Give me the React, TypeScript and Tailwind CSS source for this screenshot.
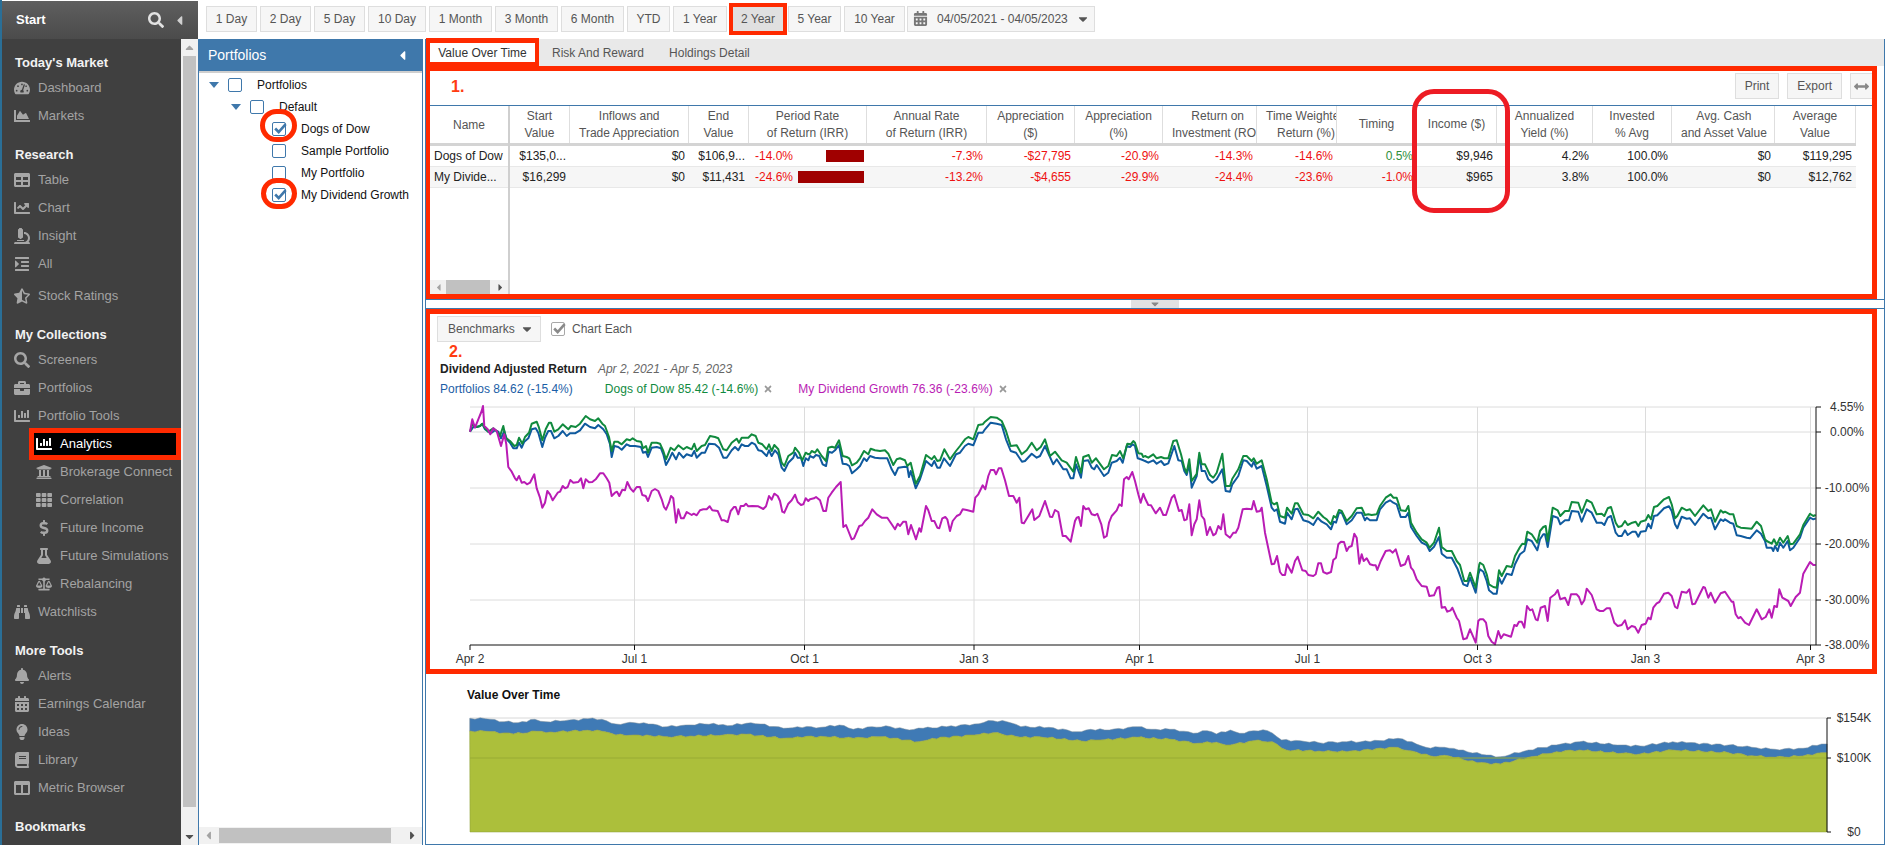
import React from 'react';
import {
  FaArrowsAltH,
  FaBalanceScale,
  FaBell,
  FaBinoculars,
  FaBook,
  FaBriefcase,
  FaCalendarAlt,
  FaCaretDown,
  FaCaretLeft,
  FaCaretRight,
  FaCaretUp,
  FaChartArea,
  FaChartBar,
  FaChartLine,
  FaColumns,
  FaDollarSign,
  FaFlask,
  FaIndent,
  FaLightbulb,
  FaMicroscope,
  FaSearch,
  FaStarHalfAlt,
  FaTable,
  FaTachometerAlt,
  FaTh,
  FaTimes,
  FaUniversity,
} from 'react-icons/fa';

// traced from crops of the reference, x = base + v / 3, y = 400 + v / 3
const magenta: [number, string][] = [
  [465, '15,92 22,55 30,80 40,55 50,30 54,15 58,75 68,85 76,100 85,82 95,90 108,135 118,100 124,130 130,198 140,212 150,232 155,238 162,225 170,245 178,243 186,250 195,245 208,220 215,262 225,290 232,320 240,305 247,270 255,280 263,298 278,275 285,272 293,255 300,262 308,258 316,237 325,245 340,243 348,232 355,262 362,235 372,244 382,243 392,235 405,217 415,217 425,232 433,245 440,285 450,275 456,272 463,285 472,266 480,268 487,243 496,262 505,272 515,258 525,258 532,282 542,285 549,300 560,270 570,264 580,270 590,295 597,318 603,326 612,305 618,285 625,292 633,365 640,325 648,352 656,352 665,333 680,342 686,338 695,343 705,328 715,325 725,325 734,316 742,328 758,330 770,358 778,358 788,363 797,330 807,318 812,318 820,340 827,315 836,315 843,308 850,316 862,315 880,316 895,324 903,316 912,285 920,296 928,278 938,285 945,300 952,332 958,335 970,308 980,298 990,281 998,303 1008,312 1015,310 1022,292 1030,300'],
  [800, '30,295 42,292 48,288 60,298 70,330 78,330 85,290 95,275 108,258 122,243 130,378 138,372 155,415 162,412 178,375 186,373 195,360 205,350 217,325 230,340 245,350 262,350 275,370 285,385 293,368 300,375 310,362 318,362 325,400 333,372 348,415 358,382 363,392 378,315 385,328 395,360 403,360 412,380 418,382 427,352 436,348 442,355 450,390 458,360 470,345 480,340 488,325 500,327 520,332 526,290 535,280 548,253 556,265 565,225 572,207 582,207 588,220 596,202 604,202 615,238 627,285 640,285 650,305 658,290 665,365 672,367 685,345 697,325 703,357 718,345 735,300 750,347 757,348 765,327 775,333 788,405 797,405 812,422 825,360 830,350 836,348 843,375 850,315 857,325 866,322 875,340 885,343 892,338 904,370 912,410 920,405 927,365 935,345 950,328 958,310 965,315 972,235 980,228 986,235 997,213 1005,240 1015,280 1022,305 1030,278'],
  [1135, '30,292 40,312 48,313 62,337 75,320 85,342 93,342 110,290 118,282 132,330 140,327 148,358 155,355 163,310 170,403 178,370 185,355 193,298 200,345 208,355 216,402 225,378 235,403 242,398 250,375 258,385 265,340 272,400 285,410 295,395 302,395 310,380 323,325 335,323 350,325 356,300 365,332 375,330 380,320 390,395 410,490 418,488 426,465 435,513 442,522 450,522 456,490 470,515 480,480 488,467 502,508 512,510 520,522 535,525 542,520 550,487 558,487 565,513 575,518 588,513 595,477 603,470 610,430 618,422 627,423 635,450 642,438 650,435 658,398 665,410 673,488 680,460 686,480 695,472 705,490 715,493 722,493 727,507 737,480 752,450 765,448 773,455 782,445 797,495 810,490 820,465 828,500 835,508 845,535 860,555 875,557 883,585 897,583 907,560 913,558 920,620 930,618 937,632 947,628 952,620 965,650 972,660 985,715 995,712 1005,685 1022,725 1030,660'],
  [1475, '15,655 25,655 33,665 40,705 50,722 60,730 70,690 78,712 86,700 108,707 118,672 125,675 132,662 140,662 148,680 156,615 165,628 172,625 182,655 188,658 197,620 210,615 218,660 226,590 240,580 248,567 256,595 270,590 280,612 288,580 305,580 312,588 320,610 328,598 335,563 350,582 365,625 375,630 385,630 395,622 405,622 418,665 428,675 440,672 450,658 458,685 470,675 480,678 490,695 500,672 512,668 520,650 527,655 535,620 545,607 553,603 567,578 580,575 590,585 600,617 607,622 620,572 635,575 643,565 652,610 660,608 685,558 690,560 700,590 707,575 720,605 737,577 750,572 770,602 775,602 782,640 790,652 797,648 810,665 822,672 845,625 860,655 872,648 883,625 890,650 898,615 906,618 913,565 922,590 940,600 947,615 962,588 975,575 985,518 1005,483 1015,492 1022,492'],
];

const blue: [number, string][] = [
  [465, '15,92 25,78 35,78 45,75 52,68 60,85 70,92 80,95 90,88 100,92 108,112 118,90 125,115 135,125 145,142 155,142 162,125 170,140 178,122 190,112 200,85 212,82 220,95 232,138 240,110 250,90 258,90 268,112 280,105 293,90 305,105 315,97 330,97 345,88 360,68 375,78 390,82 400,72 415,85 425,100 435,130 440,168 448,135 460,138 470,146 485,130 495,135 510,135 528,138 534,155 543,152 549,168 560,140 575,138 588,142 595,160 603,192 615,170 622,155 633,175 642,155 655,170 665,160 680,165 688,150 695,170 710,155 720,155 732,128 750,130 762,140 775,170 785,170 800,148 810,138 820,148 830,130 840,135 850,135 860,125 870,130 880,148 890,150 905,165 912,148 920,165 930,148 940,160 950,200 958,210 970,185 985,170 990,155 998,170 1008,170 1015,195 1022,172 1030,178'],
  [800, '30,165 40,170 48,162 58,165 68,190 78,195 86,152 96,155 105,148 117,132 128,188 140,190 148,195 156,217 170,205 180,195 192,172 200,180 210,165 225,170 240,172 262,172 275,205 285,222 295,200 315,197 322,198 327,228 332,210 347,262 360,235 378,180 395,195 403,180 412,200 420,200 432,172 450,195 468,160 480,155 495,135 505,128 520,133 535,95 548,95 555,85 572,65 590,68 605,72 618,115 632,150 648,155 666,182 675,180 695,158 710,170 720,165 735,135 760,190 770,175 790,205 800,205 812,232 820,232 828,190 843,230 850,180 865,178 875,200 883,205 890,192 912,225 925,215 935,185 950,180 960,170 968,185 980,135 990,138 998,130 1005,135 1013,172 1022,175 1030,178'],
  [1135, '30,180 40,185 55,178 65,188 78,180 88,192 100,187 118,135 130,178 140,180 148,210 155,222 163,190 170,260 185,225 193,165 200,210 210,210 220,235 232,245 245,235 262,205 272,270 285,272 292,250 310,225 325,178 335,180 350,197 356,182 365,203 380,195 395,255 410,320 418,330 426,325 435,362 450,368 456,335 470,355 480,325 488,323 505,358 520,362 535,372 548,350 560,362 575,370 588,385 596,362 603,365 612,335 620,335 635,370 650,358 665,335 680,335 690,358 695,350 705,358 725,358 735,325 752,305 765,298 775,305 785,310 797,348 812,348 820,335 828,378 845,405 860,425 875,432 884,450 897,437 912,408 920,458 935,470 950,470 968,505 985,550 997,555 1005,530 1022,575 1030,520'],
  [1475, '15,505 25,512 35,540 42,568 55,578 65,578 72,530 80,548 95,518 110,522 120,490 135,460 148,450 157,415 170,420 187,448 195,415 205,400 210,400 218,438 233,345 248,350 256,370 270,358 282,358 290,330 310,332 320,362 335,325 350,335 365,365 380,365 388,372 398,350 408,345 422,395 430,405 440,405 450,388 458,402 472,392 482,392 490,407 497,392 512,390 520,368 528,382 537,345 547,343 567,322 582,316 590,330 600,370 607,382 620,347 635,353 645,352 660,372 685,338 700,352 708,350 720,385 737,355 745,360 750,355 765,365 775,368 785,403 797,405 815,410 825,412 845,388 858,398 870,420 875,440 890,440 895,450 900,435 908,450 915,425 925,440 938,420 945,448 955,440 975,410 985,380 1005,350 1015,355 1022,352'],
];

const green: [number, string][] = [
  [465, '15,92 22,70 35,78 45,75 52,68 60,82 70,92 85,82 95,90 105,105 115,75 122,110 135,120 148,135 155,132 162,110 172,128 180,108 192,95 200,68 215,62 222,80 232,118 242,85 252,65 258,65 268,92 280,85 293,70 310,85 318,75 332,78 345,68 362,45 375,55 390,60 400,52 412,68 420,75 432,108 440,150 448,122 458,122 470,130 485,115 495,118 503,112 515,120 528,122 534,142 543,135 549,155 560,125 575,125 585,128 595,150 603,175 617,140 628,148 640,133 655,145 665,138 680,145 688,128 695,150 710,135 720,132 735,105 750,108 760,112 775,145 785,148 800,125 815,113 822,125 830,110 842,110 850,110 860,100 872,105 880,125 892,130 905,145 912,130 920,150 928,132 940,145 950,185 958,195 970,165 985,155 990,140 1002,155 1012,178 1022,155 1030,160'],
  [800, '30,158 35,150 45,155 52,145 65,165 78,180 85,140 96,137 105,140 117,118 128,165 140,168 148,172 156,193 170,185 180,172 192,150 205,160 212,143 225,148 240,150 255,148 265,158 280,192 290,175 300,172 315,178 322,195 332,185 347,248 360,225 378,162 395,175 403,165 412,180 420,178 433,145 450,175 468,150 480,135 495,115 505,108 520,115 535,72 548,70 555,62 572,48 590,50 605,60 618,90 632,135 650,133 665,160 680,148 695,125 710,148 722,138 735,115 750,165 765,152 785,178 800,185 820,212 828,168 843,215 850,168 866,162 875,185 888,172 912,205 925,195 936,162 950,165 960,150 970,172 982,128 992,130 1000,120 1005,125 1015,157 1025,158 1030,168'],
  [1135, '30,165 40,170 55,160 65,172 78,168 88,172 100,172 115,120 125,118 138,160 148,200 155,215 163,175 170,240 185,218 193,155 200,190 210,190 225,222 235,230 245,215 262,158 272,255 285,255 292,233 310,205 325,165 335,165 350,180 356,172 365,188 380,178 395,235 410,305 418,310 426,305 435,345 450,350 456,320 470,338 480,307 488,307 505,340 520,342 535,352 550,332 565,348 575,355 588,370 596,345 603,350 612,327 620,330 635,360 650,345 665,322 680,320 690,342 700,340 710,342 725,340 735,315 752,290 767,280 775,290 785,290 797,328 812,330 820,315 828,365 845,395 860,415 875,425 884,440 897,425 912,380 920,438 935,450 950,450 965,480 975,492 988,540 997,540 1005,515 1022,560 1033,490'],
  [1475, '15,485 25,492 35,520 42,550 55,558 65,560 72,508 80,525 95,495 110,498 120,465 135,438 142,428 150,430 157,392 170,400 187,425 195,390 205,378 212,375 218,420 233,320 248,328 256,345 270,330 282,330 290,303 310,305 320,335 335,297 350,305 365,340 380,338 388,345 398,322 408,318 422,365 430,378 440,375 450,360 458,372 472,365 482,362 490,375 497,362 512,358 520,342 528,355 537,318 547,315 567,295 582,288 590,310 600,352 607,345 620,320 635,328 645,325 660,345 685,313 700,330 708,325 720,362 737,328 745,335 750,332 765,340 775,340 785,375 797,380 815,382 830,383 845,362 858,375 870,415 875,420 890,428 897,415 905,432 915,410 925,425 938,405 945,430 955,428 975,400 985,372 1005,338 1015,345 1022,342'],
];

const areaTop =
  '48,145 65,146 85,155 100,158 118,148 130,155 150,152 175,146 190,148 205,162 225,158 240,162 260,170 280,165 310,160 325,167 345,160 360,162 385,175 400,170 425,172 445,165 460,178 480,170 500,170 520,180 535,175 560,170 590,162 610,152 625,155 640,170 670,172 700,185 715,178 735,180 765,170 780,178 805,178 825,190 840,182 850,192 865,180 875,190 890,182 905,182 920,210 940,212 960,218 985,215 1015,215 1045,205 1060,215 1075,232 1095,232 1110,240 1140,255 1155,260 1185,240 1215,225 1240,215 1285,225 1305,228 1340,215 1355,218 1400,225 1425,232 1450,238 1480,235 1500,222 1506,222';
const areaMid =
  '48,183 65,184 95,192 120,184 135,186 175,181 190,184 205,195 225,195 260,200 285,198 320,195 345,193 385,205 400,200 430,200 460,205 490,200 530,215 545,205 590,195 610,188 640,202 660,200 705,213 725,210 765,202 800,208 830,220 840,215 865,225 890,212 910,215 925,240 960,243 990,245 1040,232 1060,243 1080,258 1100,258 1130,278 1155,282 1185,262 1215,245 1240,240 1285,250 1305,252 1340,240 1400,248 1425,257 1450,262 1480,258 1500,248 1506,248';

const trace = (chunks: [number, string][]) =>
  chunks
    .map(([base, pts]) =>
      pts
        .split(' ')
        .map((p) => {
          const [x, y] = p.split(',').map(Number);
          return `${(base + x / 3).toFixed(1)},${(400 + y / 3).toFixed(1)}`;
        })
        .join(' ')
    )
    .join(' ');

// the value chart has a finer jag than the trace, add a small fixed ripple
const wide = (pts: string) => {
  const out: string[] = [];
  const list = pts.split(' ').map((p) => p.split(',').map(Number));
  list.forEach(([x, y], i) => {
    const next = list[i + 1];
    const px = 425 + x / 1.074;
    const py = 670 + y / 3;
    out.push(`${px.toFixed(1)},${py.toFixed(1)}`);
    if (!next) return;
    const nx = 425 + next[0] / 1.074;
    const ny = 670 + next[1] / 3;
    const steps = Math.floor((nx - px) / 4);
    for (let s = 1; s < steps; s++) {
      const t = s / steps;
      const ripple = Math.sin(s * 2.1 + i * 1.3) * 0.9;
      out.push(`${(px + (nx - px) * t).toFixed(1)},${(py + (ny - py) * t + ripple).toFixed(1)}`);
    }
  });
  return out;
};

const rangeButtons = [
  { label: '1 Day', width: 'w-[51px]' },
  { label: '2 Day', width: 'w-[51px]' },
  { label: '5 Day', width: 'w-[51px]' },
  { label: '10 Day', width: 'w-[58px]' },
  { label: '1 Month', width: 'w-[63px]' },
  { label: '3 Month', width: 'w-[63px]' },
  { label: '6 Month', width: 'w-[63px]' },
  { label: 'YTD', width: 'w-[43px]' },
  { label: '1 Year', width: 'w-[54px]' },
];

const SideItem = ({ icon: Icon, label, sub }: { icon: any; label: string; sub?: boolean }) => (
  <div className={`flex items-center h-[28px] text-[13px] text-[#a3a3a3] ${sub ? 'pl-[34px]' : 'pl-[12px]'}`}>
    <span className="w-[16px] flex justify-center shrink-0">
      <Icon size={16} className="text-[#a6a6a6]" />
    </span>
    <span className="ml-[8px] whitespace-nowrap">{label}</span>
  </div>
);

const SideTitle = ({ children, first }: { children: React.ReactNode; first?: boolean }) => (
  <div className={`h-[22px] leading-[22px] pl-[13px] text-[13px] font-bold text-[#f2f2f2] ${first ? '' : 'mt-[14px]'}`}>
    {children}
  </div>
);

const Sidebar = () => (
  <aside className="w-[198px] shrink-0 border-l-2 border-[#2a6f97] flex flex-col">
    <div className="h-[38px] mt-px flex items-center bg-gradient-to-b from-[#5f5f5f] to-[#4b4b4b] pl-[14px] text-white">
      <span className="text-[13px] font-bold">Start</span>
      <FaSearch size={16} className="ml-auto text-[#e2e2e2]" />
      <FaCaretLeft size={15} className="ml-[8px] mr-[11px] text-[#d0d0d0]" />
    </div>
    <div className="flex-1 flex min-h-0">
      <nav className="flex-1 bg-[#404040] pt-[13px] overflow-hidden">
        <SideTitle first>Today's Market</SideTitle>
        <SideItem icon={FaTachometerAlt} label="Dashboard" />
        <SideItem icon={FaChartArea} label="Markets" />
        <SideTitle>Research</SideTitle>
        <SideItem icon={FaTable} label="Table" />
        <SideItem icon={FaChartLine} label="Chart" />
        <SideItem icon={FaMicroscope} label="Insight" />
        <SideItem icon={FaIndent} label="All" />
        <div className="mt-[4px]">
          <SideItem icon={FaStarHalfAlt} label="Stock Ratings" />
        </div>
        <SideTitle>My Collections</SideTitle>
        <SideItem icon={FaSearch} label="Screeners" />
        <SideItem icon={FaBriefcase} label="Portfolios" />
        <SideItem icon={FaChartBar} label="Portfolio Tools" />
        <div className="relative -my-[2px] ml-[27px] h-[32px] border-[5px] border-[#ff2a00] bg-black flex items-center pl-[2px] text-[13px] text-white">
          <span className="w-[16px] flex justify-center">
            <FaChartBar size={16} />
          </span>
          <span className="ml-[8px]">Analytics</span>
        </div>
        <SideItem sub icon={FaUniversity} label="Brokerage Connect" />
        <SideItem sub icon={FaTh} label="Correlation" />
        <SideItem sub icon={FaDollarSign} label="Future Income" />
        <SideItem sub icon={FaFlask} label="Future Simulations" />
        <SideItem sub icon={FaBalanceScale} label="Rebalancing" />
        <SideItem icon={FaBinoculars} label="Watchlists" />
        <SideTitle>More Tools</SideTitle>
        <SideItem icon={FaBell} label="Alerts" />
        <SideItem icon={FaCalendarAlt} label="Earnings Calendar" />
        <SideItem icon={FaLightbulb} label="Ideas" />
        <SideItem icon={FaBook} label="Library" />
        <SideItem icon={FaColumns} label="Metric Browser" />
        <SideTitle>Bookmarks</SideTitle>
      </nav>
      <div className="w-[17px] shrink-0 bg-[#f1f1f1] flex flex-col items-center">
        <div className="h-[17px] flex items-center justify-center text-[#a3a3a3]">
          <FaCaretUp size={13} />
        </div>
        <div className="w-[13px] h-[751px] bg-[#c1c1c1]" />
        <div className="flex-1" />
        <div className="h-[17px] flex items-center justify-center text-[#505050]">
          <FaCaretDown size={13} />
        </div>
      </div>
    </div>
  </aside>
);

const RangeButton = ({ label, width }: { label: string; width: string }) => (
  <div className={`h-[26px] flex items-center justify-center bg-[#f6f6f6] border border-[#dedede] text-[#555] whitespace-nowrap ${width}`}>
    {label}
  </div>
);

const TopBar = () => (
  <div className="h-[39px] pl-[8px] pb-[2px] flex items-center gap-[3px] text-[12px]">
    {rangeButtons.map((b) => (
      <RangeButton key={b.label} label={b.label} width={b.width} />
    ))}
    <div className="h-[32px] w-[58px] -ml-[1px] -mr-[2px] flex items-center justify-center bg-[#e0e0e0] border-[4px] border-[#ff2a00] text-[#555]">
      2 Year
    </div>
    <RangeButton label="5 Year" width="w-[53px]" />
    <RangeButton label="10 Year" width="w-[61px]" />
    <div className="h-[26px] w-[188px] -ml-px pl-[5px] flex items-center bg-[#f6f6f6] border border-[#dedede] text-[#555]">
      <FaCalendarAlt size={15} className="text-[#777]" />
      <span className="ml-[9px]">04/05/2021 - 04/05/2023</span>
      <FaCaretDown size={14} className="ml-[8px] text-[#555]" />
    </div>
  </div>
);

const Check = ({ checked, gray }: { checked?: boolean; gray?: boolean }) => (
  <span className={`relative block w-[14px] h-[14px] shrink-0 rounded-[2px] border bg-white ${gray ? 'border-[#a8a8a8]' : 'border-[#3f78ab]'}`}>
    {checked && (
      <svg viewBox="0 0 16 14" className="absolute -top-px left-0 w-[14px] h-[13px]">
        <path d="M2.5 7 L6.5 11 L14.5 2" fill="none" stroke={gray ? '#8a8a8a' : '#3f78ab'} strokeWidth="3" />
      </svg>
    )}
  </span>
);

const Tri = () => (
  <svg viewBox="0 0 10 6" className="w-[10px] h-[6px] shrink-0">
    <polygon points="0,0 10,0 5,6" fill="#3f78ab" />
  </svg>
);

const TreeRow = ({ level, label, checked }: { level: number; label: string; checked?: boolean }) => (
  <div className={`flex items-center h-[22px] text-[12px] text-[#111] whitespace-nowrap ${level === 0 ? 'pl-[10px]' : level === 1 ? 'pl-[32px]' : 'pl-[73px]'}`}>
    {level < 2 && (
      <span className="mr-[9px]">
        <Tri />
      </span>
    )}
    <Check checked={checked} />
    <span className="ml-[15px]">{label}</span>
  </div>
);

const PortfolioPanel = () => (
  <div className="w-[225px] shrink-0 border-x border-[#3f78ab] flex flex-col">
    <div className="h-[32px] -mx-px bg-[#3f78ab] flex items-center pl-[10px] pr-[13px] text-[14px] text-white">
      <span>Portfolios</span>
      <FaCaretLeft size={15} className="ml-auto" />
    </div>
    <div className="h-[2px] bg-[#cfcfcf]" />
    <div className="relative flex-1 pt-px">
      <TreeRow level={0} label="Portfolios" />
      <TreeRow level={1} label="Default" />
      <TreeRow level={2} label="Dogs of Dow" checked />
      <TreeRow level={2} label="Sample Portfolio" />
      <TreeRow level={2} label="My Portfolio" />
      <TreeRow level={2} label="My Dividend Growth" checked />
      <div className="absolute left-[61px] top-[36px] w-[37px] h-[33px] rounded-full border-[5px] border-[#ff2a00]" />
      <div className="absolute left-[62px] top-[105px] w-[36px] h-[31px] rounded-full border-[5px] border-[#ff2a00]" />
    </div>
    <div className="h-[17px] mb-px bg-[#f1f1f1] flex items-center text-[#666]">
      <FaCaretLeft size={13} className="ml-[3px] text-[#a3a3a3]" />
      <div className="ml-[4px] w-[172px] h-[15px] bg-[#c1c1c1]" />
      <FaCaretRight size={13} className="ml-auto mr-[3px] text-[#505050]" />
    </div>
  </div>
);

const gridCols =
  'grid grid-cols-[60px_119px_60px_118px_120px_88px_88px_94px_80px_80px_80px_96px_79px_103px_81px] w-[1346px]';

const headers = [
  'Start\nValue',
  'Inflows and\nTrade Appreciation',
  'End\nValue',
  'Period Rate\nof Return (IRR)',
  'Annual Rate\nof Return (IRR)',
  'Appreciation\n($)',
  'Appreciation\n(%)',
  'Return on\nInvestment (ROI)',
  'Time Weighted\nReturn (%)',
  'Timing',
  'Income ($)',
  'Annualized\nYield (%)',
  'Invested\n% Avg',
  'Avg. Cash\nand Asset Value',
  'Average\nValue',
];

const rows = [
  {
    name: 'Dogs of Dow',
    bar: 'w-[38px]',
    cells: ['$135,0...', '$0', '$106,9...', '-14.0%', '-7.3%', '-$27,795', '-20.9%', '-14.3%', '-14.6%', '0.5%', '$9,946', '4.2%', '100.0%', '$0', '$119,295'],
  },
  {
    name: 'My Divide...',
    bar: 'w-[66px]',
    cells: ['$16,299', '$0', '$11,431', '-24.6%', '-13.2%', '-$4,655', '-29.9%', '-24.4%', '-23.6%', '-1.0%', '$965', '3.8%', '100.0%', '$0', '$12,762'],
  },
];

const DataTable = () => (
  <div className="flex-1 min-h-0 flex border-t border-[#3f78ab] text-[12px]">
    <div className="w-[80px] shrink-0 border-r-2 border-[#cfcfcf] flex flex-col">
      <div className="h-[40px] shrink-0 border-b-[3px] border-[#d4d4d4] flex items-center justify-center text-[#555]">Name</div>
      {rows.map((r, i) => (
        <div key={r.name} className={`h-[21px] shrink-0 leading-[20px] pl-[4px] border-b border-[#e8e8e8] text-[#222] whitespace-nowrap ${i % 2 ? 'bg-[#f6f6f6]' : ''}`}>
          {r.name}
        </div>
      ))}
      <div className="flex-1" />
      <div className="h-[14px] bg-[#f1f1f1] flex items-center">
        <FaCaretLeft size={11} className="ml-[3px] text-[#a3a3a3]" />
        <div className="ml-[2px] w-[44px] h-[14px] bg-[#c1c1c1]" />
        <FaCaretRight size={11} className="ml-auto mr-[2px] text-[#505050]" />
      </div>
    </div>
    <div className="flex-1 min-w-0">
      <div className={`${gridCols} h-[40px] border-b-[3px] border-[#d4d4d4] text-[#555]`}>
        {headers.map((h) => (
          <div key={h} className="flex items-center overflow-hidden border-r border-[#dedede] px-[9px]">
            <div className="min-w-full w-max shrink-0 text-center whitespace-pre leading-[17px]">{h}</div>
          </div>
        ))}
      </div>
      {rows.map((r, i) => (
        <div key={r.name} className={`${gridCols} h-[21px] border-b border-[#e8e8e8] leading-[20px] ${i % 2 ? 'bg-[#f6f6f6]' : ''}`}>
          {r.cells.map((c, j) => {
            const isGreen = c === '0.5%';
            const red = c.startsWith('-');
            const color = isGreen ? 'text-[#2f8f3a]' : red ? 'text-[#ee1111]' : 'text-[#222]';
            if (j === 3) {
              return (
                <div key={j} className={`flex items-center justify-between pl-[6px] pr-[3px] ${color}`}>
                  <span>{c}</span>
                  <span className={`h-[12px] bg-[#a00000] ${r.bar}`} />
                </div>
              );
            }
            return (
              <div key={j} className={`text-right px-[4px] whitespace-nowrap overflow-hidden ${color}`}>
                {c}
              </div>
            );
          })}
        </div>
      ))}
    </div>
  </div>
);

const yTicks: [number, string][] = [
  [406, '4.55%'],
  [431, '0.00%'],
  [487, '-10.00%'],
  [543, '-20.00%'],
  [599, '-30.00%'],
  [644, '-38.00%'],
];

const xTicks: [number, string][] = [
  [470, 'Apr 2'],
  [634.5, 'Jul 1'],
  [804.5, 'Oct 1'],
  [974, 'Jan 3'],
  [1139.5, 'Apr 1'],
  [1307.5, 'Jul 1'],
  [1477.5, 'Oct 3'],
  [1645.5, 'Jan 3'],
  [1810.5, 'Apr 3'],
];

const ReturnChart = () => (
  <svg viewBox="430 400 1442 270" className="block mt-[4px] w-[1442px] h-[270px]" fontFamily="'Liberation Sans', Arial, sans-serif" fontSize="12" fill="#333">
    {yTicks.slice(0, 5).map(([y]) => (
      <line key={y} x1="470" x2="1816" y1={y} y2={y} stroke="#dcdcdc" />
    ))}
    {xTicks.slice(1).map(([x]) => (
      <line key={x} x1={x} x2={x} y1="406" y2="644" stroke="#dcdcdc" />
    ))}
    <polyline points={trace(blue)} fill="none" stroke="#0f5a9e" strokeWidth="2" strokeLinejoin="round" />
    <polyline points={trace(green)} fill="none" stroke="#108a3e" strokeWidth="2" strokeLinejoin="round" />
    <polyline points={trace(magenta)} fill="none" stroke="#b91cb4" strokeWidth="2" strokeLinejoin="round" />
    <line x1="470" x2="1816" y1="644" y2="644" stroke="#111" />
    <line x1="1816" x2="1816" y1="406" y2="644" stroke="#111" />
    {xTicks.map(([x, t]) => (
      <g key={x}>
        <line x1={x} x2={x} y1="644" y2="649" stroke="#111" />
        <text x={x} y="662" textAnchor="middle">
          {t}
        </text>
      </g>
    ))}
    {yTicks.map(([y, t]) => (
      <g key={y}>
        <line x1="1816" x2="1821" y1={y} y2={y} stroke="#111" />
        <text x="1847" y={y + 4} textAnchor="middle">
          {t}
        </text>
      </g>
    ))}
  </svg>
);

const ValueChart = () => {
  const top = wide(areaTop);
  const mid = wide(areaMid);
  return (
    <svg viewBox="426 710 1458 134" className="block mt-[7px] w-[1458px] h-[134px]" fontFamily="'Liberation Sans', Arial, sans-serif" fontSize="12" fill="#333">
      <line x1="470" x2="1827" y1="718" y2="718" stroke="#d8d8d8" />
      <polygon points={`${top.join(' ')} ${[...mid].reverse().join(' ')}`} fill="#3f7ab5" stroke="#7f8f98" strokeWidth="0.5" />
      <polygon points={`${mid.join(' ')} 1827,832 470,832`} fill="#acbf3b" stroke="#8b9c3a" strokeWidth="0.5" />
      <line x1="470" x2="1827" y1="758" y2="758" stroke="#98ab35" />
      <line x1="1827" x2="1827" y1="718" y2="832" stroke="#111" />
      {[
        [718, '$154K'],
        [758, '$100K'],
        [832, '$0'],
      ].map(([y, t]) => (
        <g key={t as string}>
          <line x1="1827" x2="1831" y1={y as number} y2={y as number} stroke="#111" />
          <text x="1854" y={(y as number) + 4} textAnchor="middle">
            {t}
          </text>
        </g>
      ))}
    </svg>
  );
};

const Main = () => (
  <div className="flex-1 min-w-0 ml-[2px] border-x border-b border-[#3f78ab] flex flex-col text-[12px]">
    <div className="h-[27px] shrink-0 bg-[#e9e9e9] flex items-stretch text-[#555]">
      <div className="relative z-10 -mt-px h-[29px] w-[113px] border-y-[5px] border-x-[4px] border-[#ff2a00] bg-white flex items-center justify-center text-[#333]">
        Value Over Time
      </div>
      <div className="ml-[13px] flex items-center">Risk And Reward</div>
      <div className="ml-[25px] flex items-center">Holdings Detail</div>
    </div>
    <section className="relative h-[233px] shrink-0 mr-[7px] border-y-[5px] border-l-[4px] border-r-[5px] border-[#ff2a00] flex flex-col">
      <div className="h-[34px] shrink-0 flex pt-[2px]">
        <span className="ml-[21px] text-[16px] leading-[28px] font-bold text-[#ff3b12]">1.</span>
        <div className="ml-auto h-[26px] px-[9px] flex items-center bg-[#f6f6f6] border border-[#dedede] text-[#555]">Print</div>
        <div className="ml-[8px] h-[26px] px-[9px] flex items-center bg-[#f6f6f6] border border-[#dedede] text-[#555]">Export</div>
        <div className="ml-[8px] h-[26px] w-[22px] flex items-center justify-center bg-[#f6f6f6] border-y border-l border-[#dedede] text-[#888]">
          <FaArrowsAltH size={15} />
        </div>
      </div>
      <DataTable />
      <div className="absolute left-[982px] top-[18px] w-[98px] h-[124px] rounded-[22px] border-[5px] border-[#ed1c24]" />
    </section>
    <div className="h-[10px] shrink-0 border-y border-[#3f78ab] flex justify-center">
      <div className="w-[48px] bg-[#e2e2e2] flex items-center justify-center text-[#888]">
        <FaCaretDown size={12} />
      </div>
    </div>
    <section className="h-[365px] shrink-0 mr-[7px] border-y-[5px] border-l-[4px] border-r-[5px] border-[#ff2a00]">
      <div className="flex items-center mt-[2px] h-[26px]">
        <div className="ml-[7px] h-[26px] w-[104px] pl-[10px] flex items-center bg-[#f6f6f6] border border-[#dedede] text-[#555]">
          Benchmarks
          <FaCaretDown size={14} className="ml-auto mr-[6px]" />
        </div>
        <span className="ml-[10px]">
          <Check checked gray />
        </span>
        <span className="ml-[7px] text-[#555]">Chart Each</span>
      </div>
      <div className="h-[18px] mt-px pl-[19px] text-[16px] leading-[18px] font-bold text-[#ff3b12]">2.</div>
      <div className="h-[16px] pl-[10px] leading-[16px] whitespace-nowrap">
        <span className="font-bold text-[#222]">Dividend Adjusted Return</span>
        <span className="ml-[11px] italic text-[#666]">Apr 2, 2021 - Apr 5, 2023</span>
      </div>
      <div className="h-[16px] mt-[4px] pl-[10px] leading-[16px] flex items-center whitespace-nowrap">
        <span className="text-[#1b5ea6]">Portfolios 84.62 (-15.4%)</span>
        <span className="ml-[32px] tracking-[0.08px] text-[#108a3e]">Dogs of Dow 85.42 (-14.6%)</span>
        <FaTimes size={10} className="ml-[5px] text-[#999]" />
        <span className="ml-[25px] tracking-[0.12px] text-[#b91cb4]">My Dividend Growth 76.36 (-23.6%)</span>
        <FaTimes size={10} className="ml-[5px] text-[#999]" />
      </div>
      <ReturnChart />
    </section>
    <div className="flex-1 min-h-0 overflow-hidden">
      <div className="h-[16px] mt-[13px] pl-[41px] leading-[16px] font-bold text-[#111]">Value Over Time</div>
      <ValueChart />
    </div>
  </div>
);

const App = () => (
  <div className="w-full h-screen overflow-hidden bg-white flex font-['Liberation_Sans',Arial,sans-serif]">
    <Sidebar />
    <div className="flex-1 min-w-0 flex flex-col">
      <TopBar />
      <div className="flex-1 min-h-0 flex">
        <PortfolioPanel />
        <Main />
      </div>
    </div>
  </div>
);

export default App;
